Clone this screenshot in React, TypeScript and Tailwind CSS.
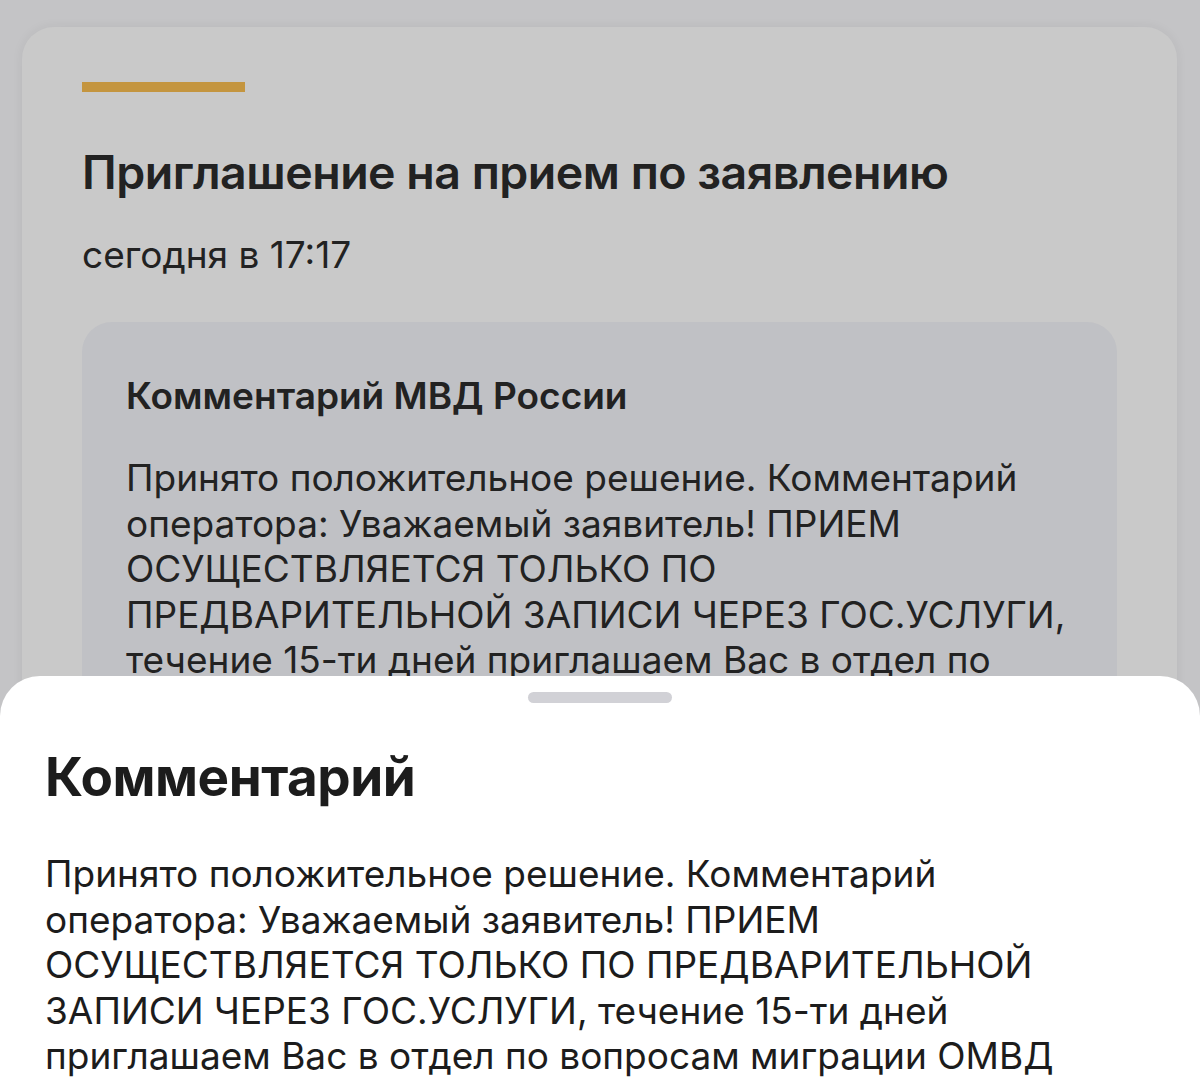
import React from 'react';

const cardLines = [
  'Принято положительное решение. Комментарий',
  'оператора: Уважаемый заявитель! ПРИЕМ',
  'ОСУЩЕСТВЛЯЕТСЯ ТОЛЬКО ПО',
  'ПРЕДВАРИТЕЛЬНОЙ ЗАПИСИ ЧЕРЕЗ ГОС.УСЛУГИ,',
  'течение 15-ти дней приглашаем Вас в отдел по',
  'вопросам миграции ОМВД России',
];

const sheetLines = [
  'Принято положительное решение. Комментарий',
  'оператора: Уважаемый заявитель! ПРИЕМ',
  'ОСУЩЕСТВЛЯЕТСЯ ТОЛЬКО ПО ПРЕДВАРИТЕЛЬНОЙ',
  'ЗАПИСИ ЧЕРЕЗ ГОС.УСЛУГИ, течение 15-ти дней',
  'приглашаем Вас в отдел по вопросам миграции ОМВД',
];

const App: React.FC = () => {
  return (
    <div className="relative h-[1083px] w-[1200px] overflow-hidden bg-[#c4c4c6] font-['Inter','Noto_Sans',sans-serif] text-[#222222]">
      {/* dimmed page behind the sheet */}
      <div className="pl-[22px] pr-[23px] pt-[27px]">
        <div className="rounded-[32px] bg-[#c9c9c9] px-[60px] pb-10 pt-[55px] shadow-[0_0_12px_rgba(0,0,0,0.06)]">
          <div className="h-[10px] w-[163px] bg-[#c4953f]"></div>
          <h1 className="mt-[52px] text-[46.5px] font-semibold leading-[56px] tracking-[-0.5px]">
            Приглашение на прием по заявлению
          </h1>
          <p className="mt-[33px] text-[37px] leading-[44px]">сегодня в 17:17</p>

          <div className="mt-[45px] rounded-[30px] bg-[#c0c1c5] px-[44px] pb-10 pt-[52px]">
            <h2 className="text-[37px] font-semibold leading-[44px]">Комментарий МВД России</h2>
            <div className="mt-[37px] text-[37px] leading-[45.5px]">
              {cardLines.map(l => (
                <div key={l} className="whitespace-nowrap">{l}</div>
              ))}
            </div>
          </div>
        </div>
      </div>

      {/* bottom sheet */}
      <div className="absolute left-0 right-0 top-[676px] bottom-0 rounded-t-[40px] bg-white px-[45px] text-[#1c1c1c]">
        <div className="mx-auto mt-[16px] h-[11px] w-[144px] rounded-full bg-[#d1d1d6]"></div>
        <h3 className="mt-[46px] text-[53px] font-bold leading-[56px] tracking-[-0.5px]">Комментарий</h3>
        <div className="mt-[46px] text-[37px] leading-[45.5px]">
          {sheetLines.map(l => (
            <div key={l} className="whitespace-nowrap">{l}</div>
          ))}
        </div>
      </div>
    </div>
  );
};

export default App;
